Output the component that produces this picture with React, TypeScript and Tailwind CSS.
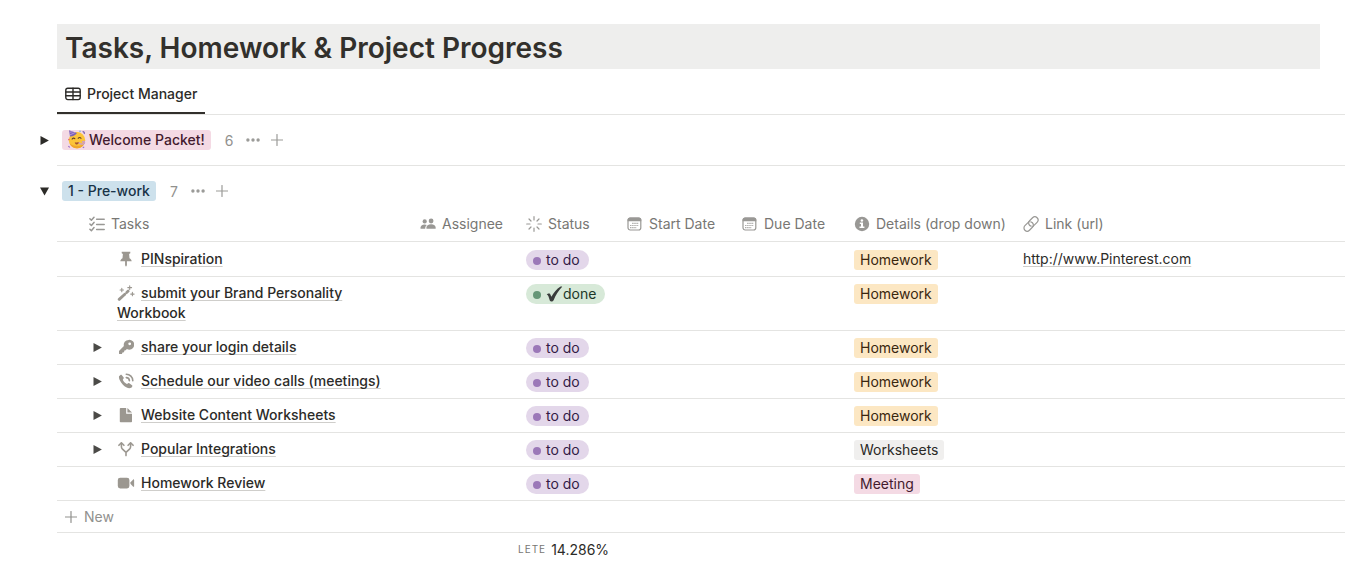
import type { ReactNode } from "react";

type IconProps = { children: ReactNode; className?: string; viewBox?: string };

function Icon({ children, className = "size-4", viewBox = "0 0 16 16" }: IconProps) {
  return (
    <svg viewBox={viewBox} className={`shrink-0 ${className}`} fill="currentColor" aria-hidden="true">
      {children}
    </svg>
  );
}

const stroke = { fill: "none", stroke: "currentColor", strokeLinecap: "round", strokeLinejoin: "round" } as const;

const TableIcon = () => (
  <Icon>
    <g {...stroke} strokeWidth="1.4">
      <rect x="0.8" y="2.2" width="14.4" height="11.4" rx="2" />
      <path d="M.8 6h14.4M.8 9.8h14.4M8 2.2v11.4" />
    </g>
  </Icon>
);

const ChecklistIcon = () => (
  <Icon>
    <g {...stroke} strokeWidth="1.5">
      <path d="M.9 2.8l1.5 1.5L5 1.2M.9 8l1.5 1.5L5 6.4M.9 13.2l1.5 1.5L5 11.6" />
      <path d="M7.6 3.2h7.6M7.6 8.4h7.6M7.6 13.4h7.6" />
    </g>
  </Icon>
);

const PeopleIcon = () => (
  <Icon>
    <circle cx="4.7" cy="5.4" r="2.1" />
    <circle cx="11.1" cy="5" r="2.4" />
    <path d="M.4 12.2c0-2.3 1.7-3.7 4.2-3.7.9 0 1.6.2 2.2.5-1 .9-1.6 2-1.6 3.7H.9c-.3 0-.5-.2-.5-.5z" />
    <path d="M6.3 12.2c0-2.3 2-3.9 4.8-3.9s4.7 1.6 4.7 3.9c0 .3-.2.5-.5.5H6.8c-.3 0-.5-.2-.5-.5z" />
  </Icon>
);

const StatusIcon = () => (
  <Icon>
    <g {...stroke} strokeWidth="1.2">
      <path d="M8 .7v3.3M8 12v3.300M.7 8H4M12 8h3.300M3 3l2 2M11 11l2 2M13 3l-2 2M5 11l-2 2" />
    </g>
  </Icon>
);

const CalendarIcon = () => (
  <Icon>
    <rect x="1" y="2" width="12.8" height="12" rx="2.2" fill="none" stroke="currentColor" strokeWidth="1.2" />
    <path d="M.6 5.2V4c0-1.500 1-2.500 2.400-2.500h8.900c1.400 0 2.400 1 2.400 2.500v1.200z" />
    <g fill="none" stroke="currentColor" strokeWidth="1.1" strokeDasharray="1.2 .9">
      <path d="M5.3 7.400h6.500M3.200 9.500h8.600M3.200 11.600h6.500" />
    </g>
  </Icon>
);

const InfoIcon = () => (
  <Icon>
    <circle cx="8" cy="8" r="7.200" />
    <g fill="#fff">
      <circle cx="7.900" cy="4.400" r="1.250" />
      <path d="M5.800 6.500h3.200v4.100h1.400v1.400H5.500v-1.400h1.500V7.900H5.800z" />
    </g>
  </Icon>
);

const LinkIcon = () => (
  <Icon>
    <g {...stroke} strokeWidth="1.2" transform="rotate(-45 8 8)">
      <path d="M8.300 4.900H2.500a3.200 3.200 0 0 0 0 6.400h4.200a3.200 3.200 0 0 0 3.200-3.200c0-.7-.2-1.300-.5-1.800" />
      <path d="M7.700 11.100h5.800a3.200 3.200 0 0 0 0-6.400H9.300a3.200 3.200 0 0 0-3.200 3.200c0 .7.200 1.300.5 1.800" />
    </g>
  </Icon>
);

const PinIcon = () => (
  <Icon>
    <path d="M3.700.8h8.600v1.500l-1.200.7.400 4.300c1.200.6 2 1.600 2.200 3H8.900v4L8 15.800l-.9-1.500v-4H2.300c.2-1.400 1-2.400 2.200-3L4.900 3l-1.200-.7z" />
  </Icon>
);

const WandIcon = () => (
  <Icon className="h-4 w-[18px]" viewBox="0 0 18 16">
    <g {...stroke}>
      <path d="M2.200 14.400l5.600-5.200" strokeWidth="2.800" />
      <path d="M9.700 7.500l1.500-1.400" strokeWidth="2.800" />
      <path d="M4.800 3.300v3.400M3.100 5h3.400M12.700.7v3.800M10.800 2.600h3.800M15.400 7.400v3.400M13.700 9.100h3.400" strokeWidth="1.100" />
    </g>
  </Icon>
);

const KeyIcon = () => (
  <Icon>
    <path
      fillRule="evenodd"
      d="M10.600.9a4.900 4.900 0 0 0-4.700 6.200L1 12v2.400c0 .4.300.7.700.7h2.200l.6-1.500 1.500-.4.400-1.600 1.300-.400 1.200-1.200A4.900 4.900 0 1 0 10.600.9zm1.100 2.500a1.400 1.400 0 1 1 0 2.800 1.400 1.400 0 0 1 0-2.800z"
    />
  </Icon>
);

const PhoneIcon = () => (
  <Icon>
    <path d="M1.200 3.100c.7-1 1.600-1.700 2.300-1.400l2.200 2.900c.3.500.1.900-.8 1.900-.3.900 2.600 4 4.200 4.500 1-.8 1.600-1.100 2.200-.7l2.700 1.900c.8.700.1 1.800-.9 2.600-1.900 1.400-5.500-.4-8.200-3.100C2.100 8.900.200 5.100 1.200 3.100z" />
    <g {...stroke} strokeWidth="1.600">
      <path d="M8.300 1.200a6.500 6.500 0 0 1 6.500 6.500M8.300 4.600a3.200 3.200 0 0 1 3.100 3.100" />
    </g>
  </Icon>
);

const PageIcon = () => (
  <Icon>
    <path d="M1.800 1.800c0-.5.300-.8.800-.8h5.600v5.700h5.800v7.800c0 .5-.3.800-.8.800H2.600c-.5 0-.8-.3-.8-.8z" />
    <path d="M9.400 1l4.600 4.500H9.400z" />
  </Icon>
);

const ForkIcon = () => (
  <Icon>
    <g {...stroke} strokeWidth="1.600">
      <path d="M8 14.600v-3.200L4.500 8.200C3.700 7.400 3.400 6.600 3.400 5.400V2.300M8 11.400l3.500-3.200c.8-.8 1.100-1.600 1.100-2.800V2.300" />
      <path d="M.9 4.300l2.500-2.500 2.500 2.500M10.100 4.300l2.500-2.500 2.500 2.500" />
    </g>
  </Icon>
);

const VideoIcon = () => (
  <Icon className="h-4 w-[18px]" viewBox="0 0 18 16">
    <rect x=".8" y="2.700" width="11.600" height="10.800" rx="2.400" />
    <path d="M13.600 7.200l2.600-2.700c.4-.3.900-.1.900.4v6.400c0 .5-.5.700-.9.400l-2.600-2.700c-.4-.5-.4-1.300 0-1.800z" />
  </Icon>
);

const PlusIcon = () => (
  <Icon className="size-3" viewBox="0 0 12 12">
    <path d="M6 .5v11M.5 6h11" stroke="currentColor" strokeWidth="1.200" strokeLinecap="round" />
  </Icon>
);

const DotsIcon = () => (
  <Icon className="h-1 w-3.5" viewBox="0 0 14 4">
    <circle cx="1.900" cy="2" r="1.700" />
    <circle cx="7" cy="2" r="1.700" />
    <circle cx="12.100" cy="2" r="1.700" />
  </Icon>
);

const PartyIcon = () => (
  <svg viewBox="1 0 18 20" className="h-5 w-[18px] shrink-0" aria-hidden="true">
    <circle cx="10" cy="10.200" r="8.200" fill="#fbc438" />
    <path d="M2.400 13.200a8.200 8.200 0 0 0 15.200 0c-3.700 3.500-10.800 3.600-15.200 0z" fill="#f0a52c" />
    <path d="M2 .2l8 2.700c-1 1.900-4.200 3.700-7 3.600z" fill="#7c62b5" />
    <path d="M2.500 2.300l3.500-.7M3 4.900l4.900-2.300" stroke="#b99bdc" strokeWidth=".9" />
    <path d="M5.100 9.100c.5-1.200 2-1.300 2.700-.4M11.200 8.300c.7-1.100 2.100-1.100 2.800 0" stroke="#63402a" strokeWidth="1.100" fill="none" strokeLinecap="round" />
    <path d="M7.800 12.200c1.400.5 2.900.5 4.100-.1-.1 1.500-.9 2.500-2 2.500-1.200 0-1.900-1-2.100-2.400z" fill="#a6532f" />
    <path d="M12.200 13c2.300 1.900 5.500 1.400 5.400-.7-.1-1.400-2.100-1.300-1.900.1" stroke="#c99ad0" strokeWidth="1.300" fill="none" strokeLinecap="round" />
    <path d="M15.600 1.700c1.500-.1 2.100 1 1.600 2.200" stroke="#7c62b5" strokeWidth="1.200" fill="none" />
    <circle cx="13" cy="1.200" r=".7" fill="#53a8dc" />
    <circle cx="1.900" cy="9.500" r=".7" fill="#e25c5c" />
    <path d="M1.300 16.200l1.700 1.200M15.800 17.800l1.400-.9" stroke="#9869c9" strokeWidth="1.100" />
  </svg>
);

function Triangle({ open = false }: { open?: boolean }) {
  return (
    <Icon className="size-[9px]" viewBox="0 0 9 9">
      {open ? <path d="M0 .6h9L4.500 8.600z" /> : <path d="M.5 0v9l8.400-4.500z" />}
    </Icon>
  );
}

type GroupProps = { name: string; count: number; open?: boolean; tone: string; icon?: ReactNode };

function GroupHeader({ name, count, open = false, tone, icon }: GroupProps) {
  return (
    <div className="flex h-5 items-center pl-10">
      <button type="button" aria-label={`Toggle ${name}`} aria-expanded={open} className="mr-[13px]">
        <Triangle open={open} />
      </button>
      <h2 className={`flex h-5 items-center gap-[3px] rounded-[3px] px-1.5 font-medium leading-5 ${tone}`}>
        {icon}
        {name}
      </h2>
      <span className="ml-3.5 w-[21px] text-[#91918e]">{count}</span>
      <button type="button" aria-label={`${name} options`} className="mr-[11px] text-[#9b9b98]">
        <DotsIcon />
      </button>
      <button type="button" aria-label={`Add to ${name}`} className="text-[#9b9b98]">
        <PlusIcon />
      </button>
    </div>
  );
}

const columns: { label: string; icon: ReactNode; width: string; pad: string }[] = [
  { label: "Tasks", icon: <ChecklistIcon />, width: "w-[355px]", pad: "pl-8" },
  { label: "Assignee", icon: <PeopleIcon />, width: "w-[106px]", pad: "pl-2" },
  { label: "Status", icon: <StatusIcon />, width: "w-[101px]", pad: "pl-2" },
  { label: "Start Date", icon: <CalendarIcon />, width: "w-[115px]", pad: "pl-2" },
  { label: "Due Date", icon: <CalendarIcon />, width: "w-[112px]", pad: "pl-2" },
  { label: "Details (drop down)", icon: <InfoIcon />, width: "w-[169px]", pad: "pl-2" },
  { label: "Link (url)", icon: <LinkIcon />, width: "w-auto", pad: "pl-2" },
];

const tagTones = {
  Homework: "bg-[#fce7c3] text-[#39260f]",
  Worksheets: "bg-[#f0efee] text-[#292825]",
  Meeting: "bg-[#f4dae4] text-[#431b2e]",
};

type Task = {
  title: string;
  icon: ReactNode;
  nested?: boolean;
  done?: boolean;
  detail: keyof typeof tagTones;
  link?: string;
};

const tasks: Task[] = [
  { title: "PINspiration", icon: <PinIcon />, detail: "Homework", link: "http://www.Pinterest.com" },
  { title: "submit your Brand Personality Workbook", icon: <WandIcon />, done: true, detail: "Homework" },
  { title: "share your login details", icon: <KeyIcon />, nested: true, detail: "Homework" },
  { title: "Schedule our video calls (meetings)", icon: <PhoneIcon />, nested: true, detail: "Homework" },
  { title: "Website Content Worksheets", icon: <PageIcon />, nested: true, detail: "Homework" },
  { title: "Popular Integrations", icon: <ForkIcon />, nested: true, detail: "Worksheets" },
  { title: "Homework Review", icon: <VideoIcon />, detail: "Meeting" },
];

const underline =
  "underline decoration-[#cfcecb] decoration-1 underline-offset-2 [text-decoration-skip-ink:none]";

function StatusPill({ done = false }: { done?: boolean }) {
  return (
    <span
      className={`inline-flex h-5 items-center rounded-full pl-[7px] pr-[9px] leading-5 ${
        done ? "bg-[#d7e9d8] text-[#1c3829]" : "bg-[#e3d7ea] text-[#341b45]"
      }`}
    >
      <span className={`mt-0.5 mr-[5px] size-2 rounded-full ${done ? "bg-[#669777]" : "bg-[#9b78b8]"}`} />
      {done && (
        <svg viewBox="0 0 17 16" className="h-4 w-[17px]" fill="#393c3b" aria-hidden="true">
          <path d="M.7 8.600c.8-1 2.700-1.600 3.400-.6l1.300 2.800C7.700 6.800 10.900 2.400 14.200.7c.7-.3 1.900-.3 2 .1C12.600 4.600 9.600 9.400 7.600 14.200c-.7 1.500-3.100 1.600-3.700.5L2.500 10.500c-.3-.9-.9-1.400-1.800-1.900z" />
        </svg>
      )}
      {done ? "done" : "to do"}
    </span>
  );
}

export default function App() {
  return (
    <main className="bg-white pt-6 font-[Inter,sans-serif] text-sm leading-[21px] text-[#2c2b28]">
      <h1 className="mr-[25px] ml-[57px] bg-[#eeeeed] pt-[3px] pl-2 text-[28px] leading-[42px] font-semibold text-[#32302c]">
        Tasks, Homework &amp; Project Progress
      </h1>

      <nav className="ml-[57px] flex border-b border-[#e4e4e2]">
        <a
          href="#project-manager"
          className="flex items-center gap-1.5 border-b-2 border-[#32302c] px-2 pt-3.5 pb-2 font-medium"
        >
          <TableIcon />
          Project Manager
        </a>
      </nav>

      <section className="py-[15px]">
        <GroupHeader name="Welcome Packet!" count={6} tone="bg-[#f4dae4] text-[#431b2e]" icon={<PartyIcon />} />
      </section>

      <section>
        <div className="ml-[57px] border-t border-[#e4e4e2]" />
        <div className="pt-[15px] pb-[7px]">
          <GroupHeader name="1 - Pre-work" count={7} open tone="bg-[#cde1ec] text-[#183347]" />
        </div>
        <div className="pl-[57px]">
          <table className="w-full table-fixed border-separate border-spacing-0 text-left leading-5">
            <thead>
              <tr>
                {columns.map((c) => (
                  <th
                    key={c.label}
                    scope="col"
                    className={`border-b border-[#e4e4e2] pt-1.5 pb-[7px] font-normal text-[#787774] ${c.width} ${c.pad}`}
                  >
                    <span className="flex items-center gap-1.5 whitespace-nowrap [&>svg]:text-[#999895]">
                      {c.icon}
                      {c.label}
                    </span>
                  </th>
                ))}
              </tr>
            </thead>
            <tbody className="[&_td]:border-b [&_td]:border-[#e4e4e2] [&_td]:pt-1.5 [&_td]:pb-[7px] [&_td]:align-top [&>tr:first-child>td]:pt-[7px]">
              {tasks.map((t) => (
                <tr key={t.title}>
                  <td className="pr-2 pl-9">
                    <div className="flex">
                      <div className="flex h-5 w-6 shrink-0 items-center text-[#4b4a47]">
                        {t.nested && (
                          <button type="button" aria-label={`Expand ${t.title}`}>
                            <Triangle />
                          </button>
                        )}
                      </div>
                      <a href="#task" className="font-medium">
                        <span className="mr-1.5 inline-flex h-5 w-[18px] items-center justify-center align-top text-[#9b9790]">
                          {t.icon}
                        </span>
                        <span className={underline}>{t.title}</span>
                      </a>
                    </div>
                  </td>
                  <td />
                  <td className="pl-2">
                    <div className="flex h-5 items-start pt-px">
                      <StatusPill done={t.done} />
                    </div>
                  </td>
                  <td />
                  <td />
                  <td className="pl-2">
                    <div className="flex h-5 items-start pt-px">
                      <span className={`h-5 rounded-[3px] px-1.5 leading-5 ${tagTones[t.detail]}`}>{t.detail}</span>
                    </div>
                  </td>
                  <td className="pl-2">
                    {t.link && (
                      <a href={t.link} className={underline}>
                        {t.link}
                      </a>
                    )}
                  </td>
                </tr>
              ))}
            </tbody>
          </table>
          <button
            type="button"
            className="flex h-8 w-full items-center gap-[7px] border-b border-[#e4e4e2] pl-2 text-[#91918e]"
          >
            <PlusIcon />
            New
          </button>
          <div className="flex items-center gap-[5px] pt-1.5 pl-[461px]">
            <span className="text-[10px] tracking-widest text-[#787774]">LETE</span>
            <span>14.286%</span>
          </div>
        </div>
      </section>
    </main>
  );
}
